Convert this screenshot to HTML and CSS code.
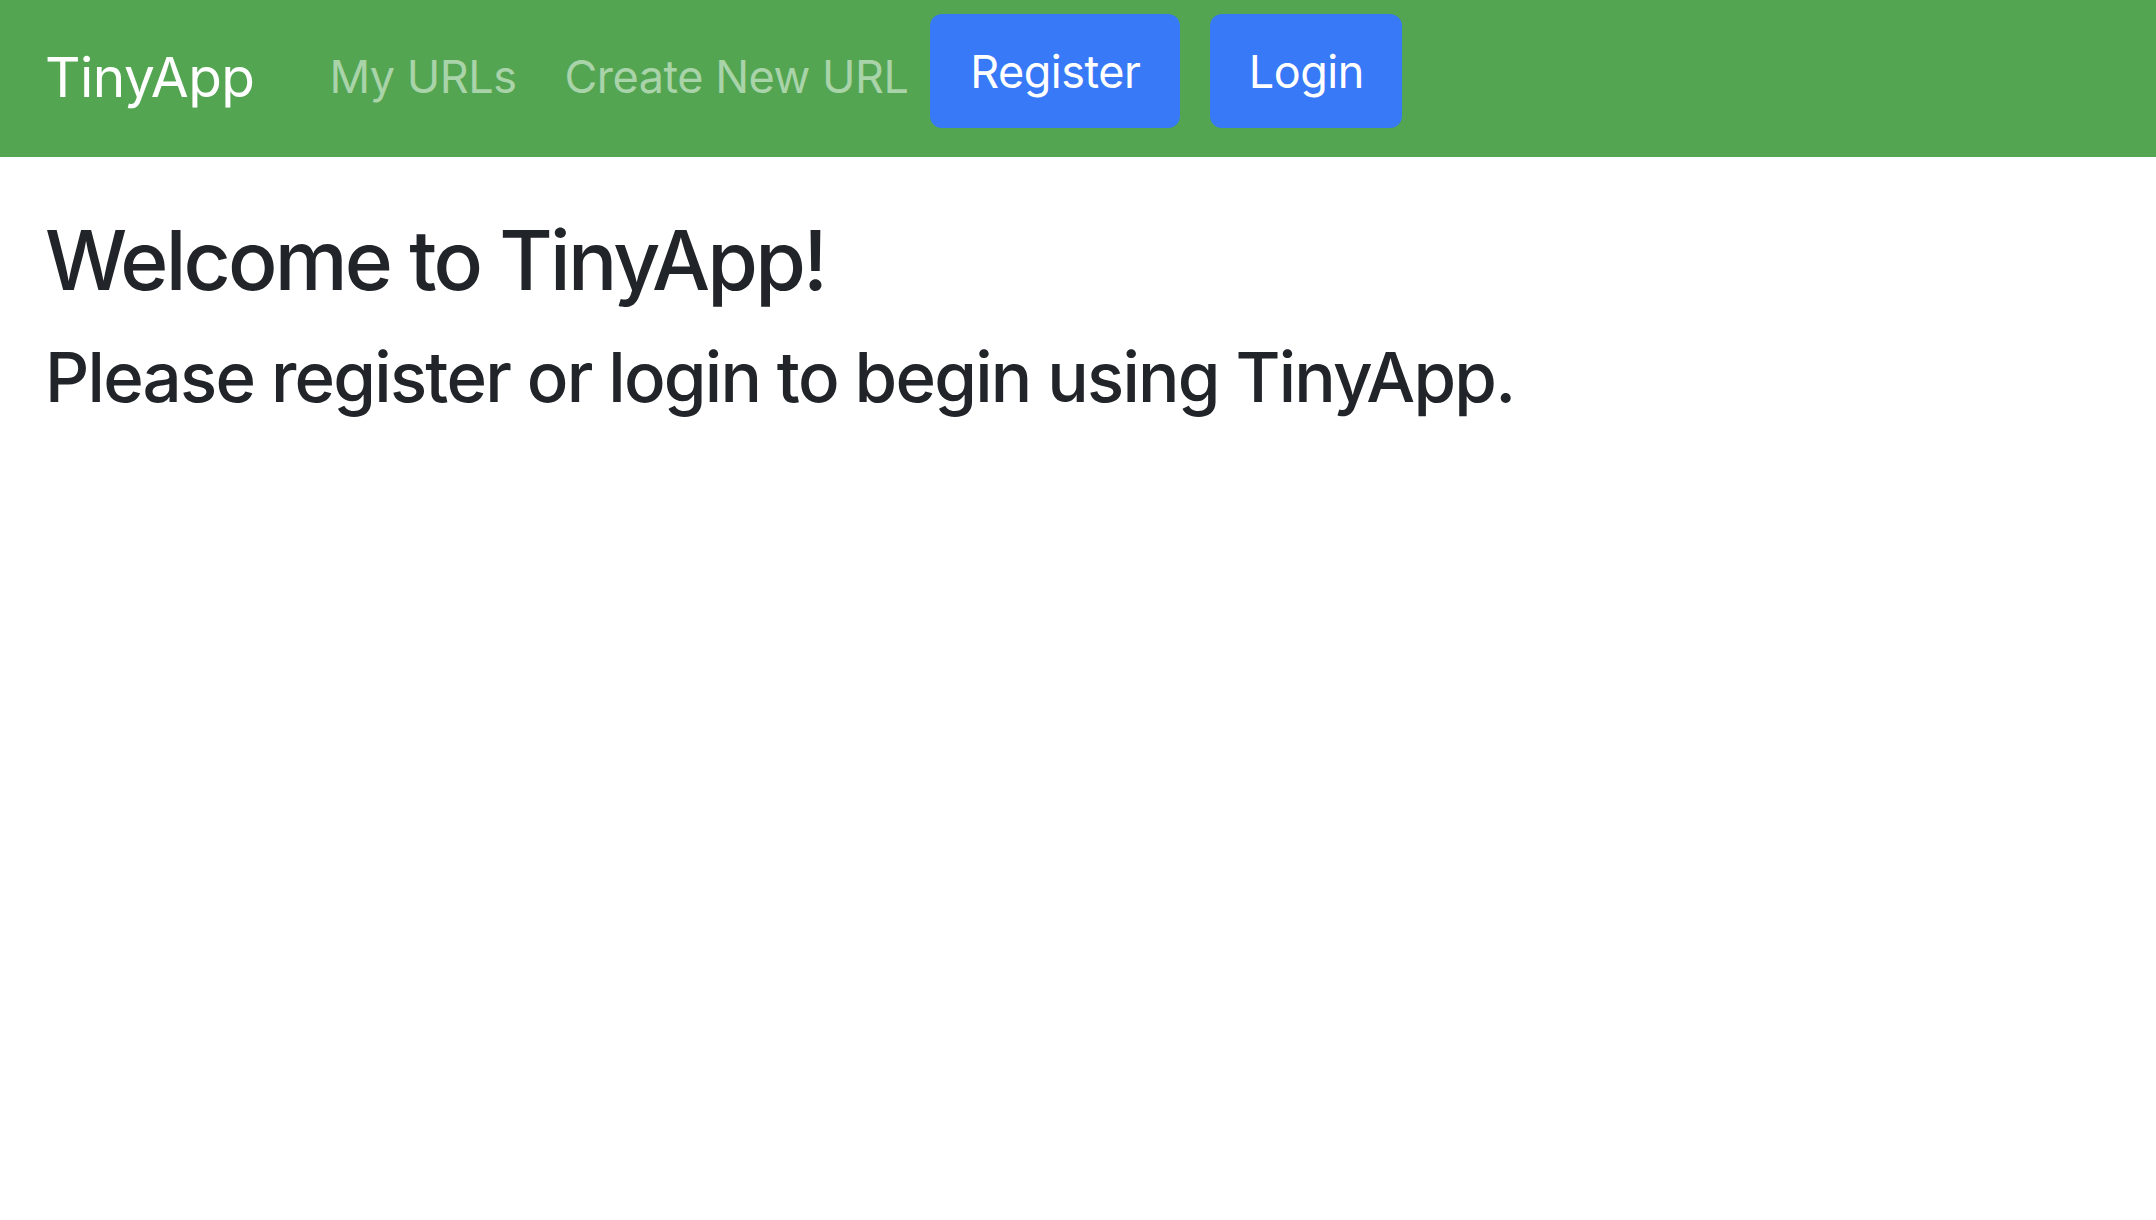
FILE: index.html
```html
<!DOCTYPE html>
<html lang="en">
<head>
<meta charset="utf-8">
<title>TinyApp</title>
<link rel="stylesheet" href="styles.css">
</head>
<body>
<nav class="navbar">
  <a class="brand" href="#">TinyApp</a>
  <a class="nav-link" href="#">My URLs</a>
  <a class="nav-link nav-link-last" href="#">Create New URL</a>
  <a class="btn btn-register" href="#">Register</a>
  <a class="btn btn-login" href="#">Login</a>
</nav>
<main class="content">
  <h1 class="title">Welcome to TinyApp!</h1>
  <h2 class="subtitle">Please register or login to begin using TinyApp.</h2>
</main>
</body>
</html>
```

FILE: styles.css
```css
html, body {
  margin: 0;
  padding: 0;
  background: #ffffff;
}
body {
  font-family: Inter, "Noto Sans", "Liberation Sans", sans-serif;
  color: #212529;
}
a { text-decoration: none; }

.navbar {
  display: flex;
  align-items: center;
  height: 157px;
  box-sizing: border-box;
  padding: 0 0 0 45px;
  background: #54a552;
}
.brand {
  font-size: 55px;
  color: #ffffff;
  letter-spacing: -0.5px;
  margin-right: 75px;
  margin-top: -4px;
}
.nav-link {
  font-size: 45px;
  color: #a9d3a8;
  letter-spacing: -0.5px;
  margin-right: 48px;
  margin-top: -4px;
}
.nav-link-last {
  margin-right: 22px;
}
.btn {
  display: flex;
  align-items: center;
  justify-content: center;
  height: 114px;
  box-sizing: border-box;
  border-radius: 12px;
  background: #3779f6;
  color: #ffffff;
  font-size: 45px;
  letter-spacing: -0.5px;
  margin-bottom: 15px;
}
.btn-register {
  width: 250px;
  margin-right: 30px;
}
.btn-login {
  width: 192px;
}

.content {
  padding: 0 45px;
}
.title {
  margin: 55px 0 0;
  font-size: 82px;
  font-weight: 500;
  line-height: 1.2;
  letter-spacing: -2.8px;
}
.subtitle {
  margin: 26px 0 0;
  font-size: 69px;
  font-weight: 500;
  line-height: 1.2;
  letter-spacing: -1.75px;
}
```
